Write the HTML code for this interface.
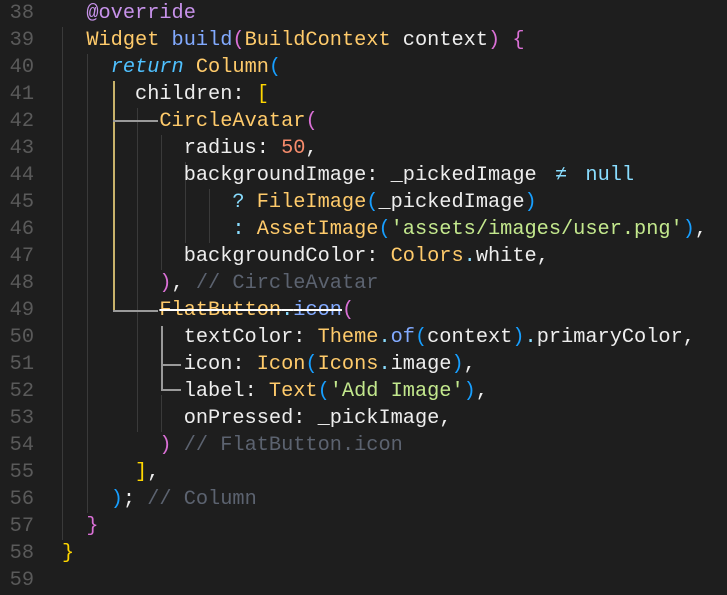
<!DOCTYPE html>
<html><head><meta charset="utf-8"><style>
html,body{margin:0;padding:0;background:#1e1e1e;width:727px;height:595px;overflow:hidden;position:relative}
.l{position:absolute;left:0;height:27px;line-height:27px;font-family:"Liberation Mono",monospace;font-size:20.3px;color:#eeeeee;white-space:pre}
.n{position:absolute;width:34px;text-align:right;color:#5a5a5a;left:0}
.c{position:absolute;left:62px}
.g{position:absolute;width:1px;background:#3a3a3a}
.h{position:absolute;height:2px;background:#9a9a9a}
.a{color:#c792ea}.y{color:#ffcb6b}.b{color:#82aaff}.k{color:#4fc1ff;font-style:italic}
.o{color:#f78c6c}.s{color:#c3e88d}.m{color:#5c6370}.p{color:#da70d6}.q{color:#ffd700}.u{color:#179fff}.z{color:#eeeeee}.d{color:#89ddff}
.ne{display:inline-block;width:24.4px;text-align:center;color:#89ddff}
</style></head><body>
<div class="g" style="left:62px;top:27px;height:513px"></div>
<div class="g" style="left:87px;top:54px;height:459px"></div>
<div class="g" style="left:137px;top:108px;height:324px"></div>
<div class="g" style="left:161px;top:135px;height:135px"></div>
<div class="g" style="left:185px;top:162px;height:81px"></div>
<div class="g" style="left:209px;top:189px;height:54px"></div>
<div class="g" style="left:161px;top:395px;height:37px"></div>
<div style="position:absolute;left:113px;top:81px;width:2px;height:231px;background:#c8b26a"></div>
<div class="h" style="left:113px;top:120px;width:45px"></div>
<div class="h" style="left:113px;top:310px;width:45px"></div>
<div style="position:absolute;left:161px;top:326px;width:2px;height:65px;background:#9a9a9a"></div>
<div class="h" style="left:161px;top:364px;width:20px"></div>
<div class="h" style="left:161px;top:389px;width:20px"></div>
<div class="l" style="top:0"><span class="n">38</span><span class="c">  <span class="a">@override</span></span></div>
<div class="l" style="top:27px"><span class="n">39</span><span class="c">  <span class="y">Widget</span> <span class="b">build</span><span class="p">(</span><span class="y">BuildContext</span> context<span class="p">)</span> <span class="p">{</span></span></div>
<div class="l" style="top:54px"><span class="n">40</span><span class="c">    <span class="k">return</span> <span class="y">Column</span><span class="u">(</span></span></div>
<div class="l" style="top:81px"><span class="n">41</span><span class="c">      children<span class="z">:</span> <span class="q">[</span></span></div>
<div class="l" style="top:108px"><span class="n">42</span><span class="c">        <span class="y">CircleAvatar</span><span class="p">(</span></span></div>
<div class="l" style="top:135px"><span class="n">43</span><span class="c">          radius<span class="z">:</span> <span class="o">50</span><span class="z">,</span></span></div>
<div class="l" style="top:162px"><span class="n">44</span><span class="c">          backgroundImage<span class="z">:</span> _pickedImage <span class="ne">≠</span> <span class="d">null</span></span></div>
<div class="l" style="top:189px"><span class="n">45</span><span class="c">              <span class="d">?</span> <span class="y">FileImage</span><span class="u">(</span>_pickedImage<span class="u">)</span></span></div>
<div class="l" style="top:216px"><span class="n">46</span><span class="c">              <span class="d">:</span> <span class="y">AssetImage</span><span class="u">(</span><span class="s">'assets/images/user.png'</span><span class="u">)</span><span class="z">,</span></span></div>
<div class="l" style="top:243px"><span class="n">47</span><span class="c">          backgroundColor<span class="z">:</span> <span class="y">Colors</span><span class="d">.</span>white<span class="z">,</span></span></div>
<div class="l" style="top:270px"><span class="n">48</span><span class="c">        <span class="p">)</span><span class="z">,</span> <span class="m">// CircleAvatar</span></span></div>
<div class="l" style="top:297px"><span class="n">49</span><span class="c">        <span class="y" style="text-decoration:line-through;text-decoration-color:#fff">FlatButton</span><span style="text-decoration:line-through;text-decoration-color:#fff"><span class="d">.</span><span class="b">icon</span></span><span class="p">(</span></span></div>
<div class="l" style="top:324px"><span class="n">50</span><span class="c">          textColor<span class="z">:</span> <span class="y">Theme</span><span class="d">.</span><span class="b">of</span><span class="u">(</span>context<span class="u">)</span><span class="d">.</span>primaryColor<span class="z">,</span></span></div>
<div class="l" style="top:351px"><span class="n">51</span><span class="c">          icon<span class="z">:</span> <span class="y">Icon</span><span class="u">(</span><span class="y">Icons</span><span class="d">.</span>image<span class="u">)</span><span class="z">,</span></span></div>
<div class="l" style="top:378px"><span class="n">52</span><span class="c">          label<span class="z">:</span> <span class="y">Text</span><span class="u">(</span><span class="s">'Add Image'</span><span class="u">)</span><span class="z">,</span></span></div>
<div class="l" style="top:405px"><span class="n">53</span><span class="c">          onPressed<span class="z">:</span> _pickImage<span class="z">,</span></span></div>
<div class="l" style="top:432px"><span class="n">54</span><span class="c">        <span class="p">)</span> <span class="m">// FlatButton.icon</span></span></div>
<div class="l" style="top:459px"><span class="n">55</span><span class="c">      <span class="q">]</span><span class="z">,</span></span></div>
<div class="l" style="top:486px"><span class="n">56</span><span class="c">    <span class="u">)</span><span class="z">;</span> <span class="m">// Column</span></span></div>
<div class="l" style="top:513px"><span class="n">57</span><span class="c">  <span class="p">}</span></span></div>
<div class="l" style="top:540px"><span class="n">58</span><span class="c"><span class="q">}</span></span></div>
<div class="l" style="top:567px"><span class="n">59</span></div>
</body></html>
